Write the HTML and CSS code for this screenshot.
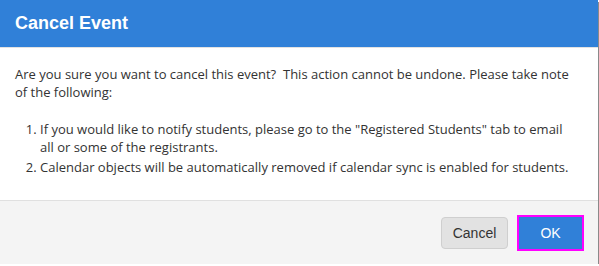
FILE: index.html
```html
<!DOCTYPE html>
<html>
<head>
<meta charset="utf-8">
<link rel="stylesheet" href="styles.css">
</head>
<body>
<div class="dialog">
  <div class="header">Cancel Event</div>
  <div class="content">
    <p class="intro">Are you sure you want to cancel this event?&nbsp; This action cannot be undone. Please take note of the following:</p>
    <ol class="notes">
      <li>If you would like to notify students, please go to the "Registered Students" tab to email all or some of the registrants.</li>
      <li>Calendar objects will be automatically removed if calendar sync is enabled for students.</li>
    </ol>
  </div>
  <div class="footer">
    <button class="btn btn-cancel">Cancel</button>
    <button class="btn btn-ok">OK</button>
  </div>
</div>
</body>
</html>
```
FILE: styles.css
```css
html, body {
  margin: 0;
  padding: 0;
  background: #ffffff;
}
body {
  font-family: "Liberation Sans", Arial, sans-serif;
}
.dialog {
  width: 598px;
  height: 264px;
  display: flex;
  flex-direction: column;
  background: #fff;
  box-shadow: 1px 2px 0 #8a8a8a;
}
.header {
  height: 47px;
  border-bottom: 1px solid #e2e2e2;
  background: #3080d8;
  color: #fff;
  font-weight: bold;
  font-size: 18px;
  line-height: 47px;
  padding-left: 15px;
  box-sizing: content-box;
}
.content {
  flex: 1;
  padding: 17px 15px 0 15px;
  color: #333;
  font-family: "Open Sans", "Liberation Sans", sans-serif;
  font-size: 13px;
  line-height: 18px;
}
.intro {
  margin: 0 0 19px 0;
}
.notes {
  margin: 0;
  padding-left: 25px;
  padding-right: 6px;
}
.notes li + li {
  margin-top: 2px;
}
.footer {
  height: 63px;
  border-top: 1px solid #e0e0e0;
  background: #f4f4f4;
  display: flex;
  align-items: center;
  justify-content: flex-end;
  gap: 11px;
  padding-right: 16px;
}
.btn {
  font-family: "Liberation Sans", Arial, sans-serif;
  font-size: 14px;
  height: 32px;
  border-radius: 4px;
  cursor: pointer;
}
.btn-cancel {
  width: 67px;
  background: #e2e2e2;
  border: 1px solid #cfcfcf;
  color: #333;
}
.btn-ok {
  width: 63px;
  background: #3080d8;
  border: none;
  color: #fff;
  border-radius: 0;
  outline: 2px solid #ff00ff;
}
```
